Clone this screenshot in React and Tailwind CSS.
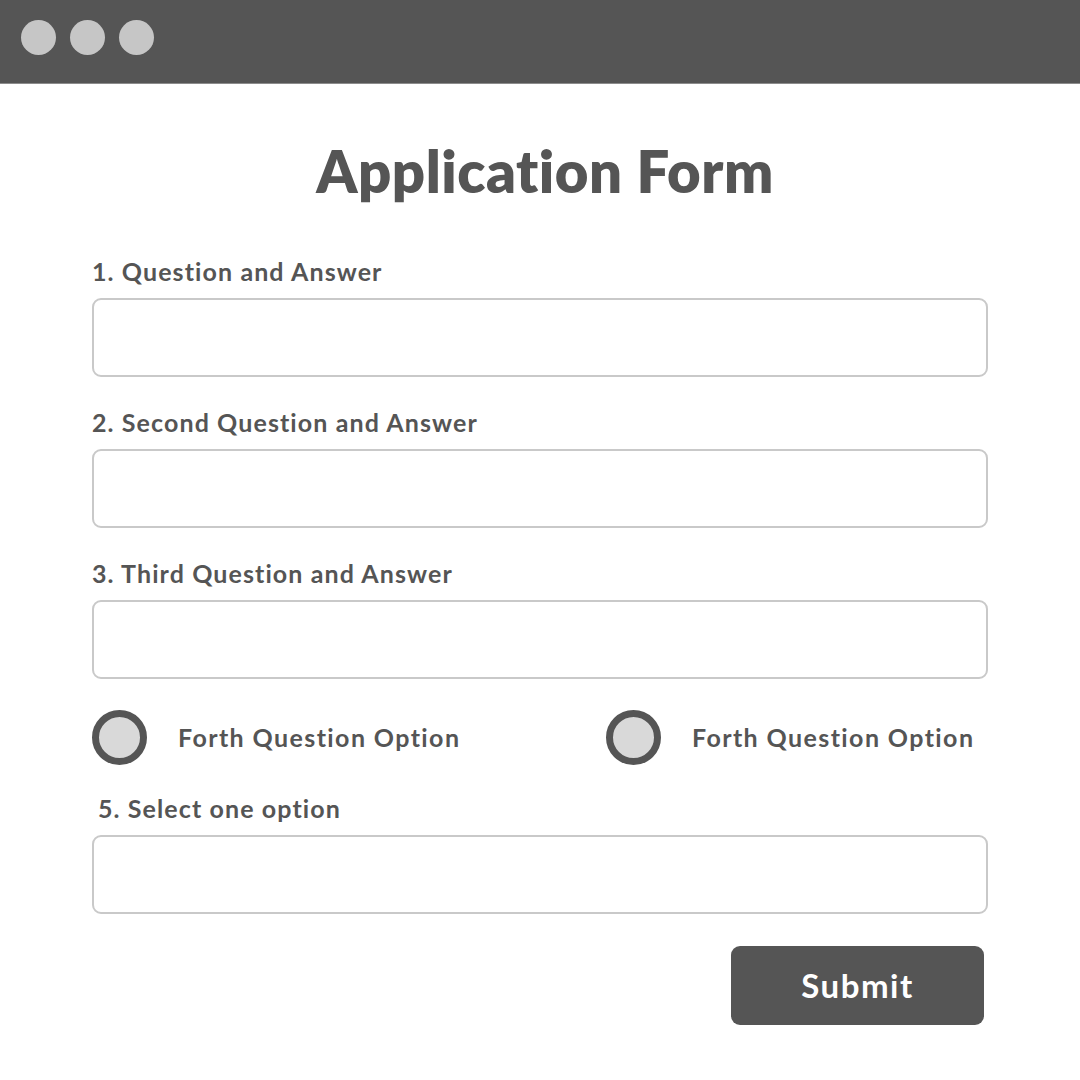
import React from 'react';

const font = { fontFamily: 'Lato, "Open Sans", sans-serif' };

const Field = ({ label, labelClass = '' }) => (
  <div className="flex flex-col">
    <label className={`text-[25px] font-bold leading-[30px] text-[#555555] tracking-[1.1px] ${labelClass}`}>{label}</label>
    <div className="mt-[12px] h-[79px] rounded-[9px] border-2 border-[#c9c9c9] bg-white" />
  </div>
);

const Radio = ({ text }) => (
  <div className="flex items-center">
    <div className="h-[55px] w-[55px] rounded-full border-[7px] border-[#555555] bg-[#d9d9d9]" />
    <span className="ml-[31px] text-[25px] font-bold text-[#555555] tracking-[1.4px]">{text}</span>
  </div>
);

export default function App() {
  return (
    <div className="h-[1080px] w-[1080px] bg-white" style={font}>
      <div className="flex h-[84px] items-center gap-[14px] border-b border-[#8c8c8c] bg-[#555555] pl-[21px] pb-[8px]">
        <span className="h-[35px] w-[35px] rounded-full bg-[#c6c6c6]" />
        <span className="h-[35px] w-[35px] rounded-full bg-[#c6c6c6]" />
        <span className="h-[35px] w-[35px] rounded-full bg-[#c6c6c6]" />
      </div>

      <div className="px-[92px]">
        <h1 className="mt-[52px] pl-[10px] text-center text-[58px] font-extrabold leading-[70px] tracking-[0.5px] text-[#555555]">Application Form</h1>

        <div className="mt-[50px] flex flex-col gap-[30px]">
          <Field label="1. Question and Answer" />
          <Field label="2. Second Question and Answer" />
          <Field label="3. Third Question and Answer" />
        </div>

        <div className="mt-[31px] grid grid-cols-2">
          <Radio text="Forth Question Option" />
          <div className="pl-[66px]">
            <Radio text="Forth Question Option" />
          </div>
        </div>

        <div className="mt-[28px]">
          <Field label="5. Select one option" labelClass="pl-[6px]" />
        </div>

        <div className="mt-[32px] flex justify-end pr-[4px]">
          <button className="h-[79px] w-[253px] rounded-[9px] bg-[#555555] text-[33px] font-bold tracking-[1.5px] text-white">Submit</button>
        </div>
      </div>
    </div>
  );
}
